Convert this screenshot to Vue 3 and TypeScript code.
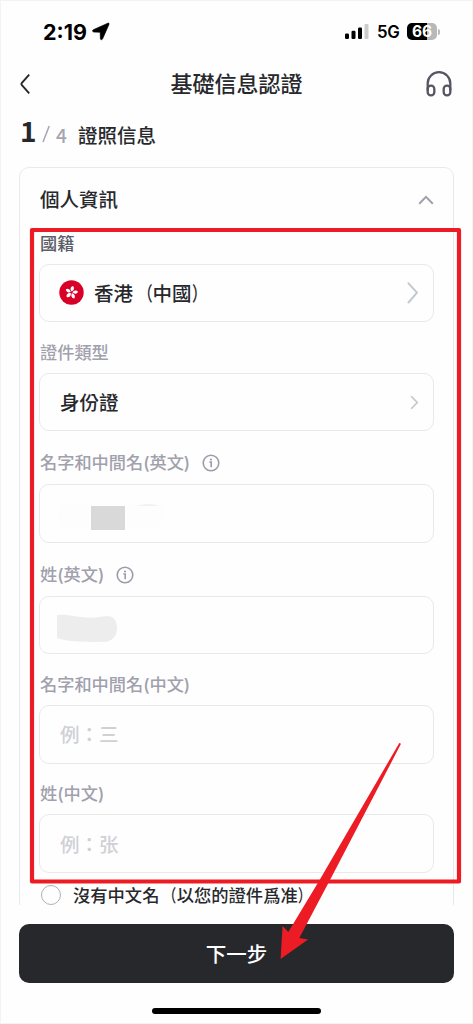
<script setup lang="ts">
interface Field {
  label: string
  kind: 'region' | 'select' | 'mask-block' | 'mask-blob' | 'input'
  value?: string
  info?: boolean
  dark?: boolean
}

const fields: Field[] = [
  { label: '國籍', kind: 'region', value: '香港（中國）', dark: true },
  { label: '證件類型', kind: 'select', value: '身份證' },
  { label: '名字和中間名(英文)', kind: 'mask-block', info: true },
  { label: '姓(英文)', kind: 'mask-blob', info: true },
  { label: '名字和中間名(中文)', kind: 'input', value: '例：三' },
  { label: '姓(中文)', kind: 'input', value: '例：张' },
]

const optionText = '沒有中文名（以您的證件爲准）'
const petals = [0, 72, 144, 216, 288]

// Full-width brackets are set apart so that they hug the text they enclose.
function pieces(text: string): string[] {
  return text.split(/([（）])/).filter((part) => part !== '')
}

function bracketClass(part: string): string {
  if (part === '（') return 'bracket open'
  return part === '）' ? 'bracket close' : ''
}
</script>

<template>
  <div class="phone">
    <header class="status">
      <span class="time">2:19</span>
      <svg class="location" width="18" height="19" viewBox="0 0 18 19">
        <path d="M15.9 1.2 1.3 7.8C.2 8.4.4 9.8 1.7 10L8.2 10.2 8.4 16.6C8.5 18 9.9 18.1 10.5 17L17 2.3C17.3 1.5 16.7 .9 15.9 1.2Z" fill="#000" stroke="#000" stroke-width=".7" />
      </svg>
      <svg class="signal" width="24" height="16" viewBox="0 0 24 16">
        <rect x="0" y="9.5" width="4" height="5.5" rx="1.2" />
        <rect x="6.5" y="6.8" width="4" height="8.2" rx="1.2" />
        <rect x="13" y="3.5" width="4" height="11.5" rx="1.2" />
        <rect x="19.5" y="0" width="4" height="15" rx="1.2" fill="#ccc" />
      </svg>
      <span class="network">5G</span>
      <span class="battery"><span class="level">66</span><i></i></span>
    </header>

    <nav class="nav">
      <svg class="back" width="11" height="22" viewBox="0 0 11 22">
        <path d="M9.2 1.6 1.7 10.2Q1.1 11 1.7 11.8L9.2 20.3" fill="none" stroke="#27282c" stroke-width="1.9" />
      </svg>
      <h1>基礎信息認證</h1>
      <svg class="support" width="26" height="26" viewBox="0 0 26 26" fill="none" stroke="#565663" stroke-width="2.3">
        <path d="M1.7 19.5V12.3a11.3 11.1 0 0 1 22.6 0v7.2" />
        <rect x="1.7" y="14.6" width="6.6" height="9.8" rx="3.2" />
        <rect x="17.7" y="14.6" width="6.6" height="9.8" rx="3.2" />
      </svg>
    </nav>

    <div class="step">
      <b>1</b>
      <svg width="8" height="18" viewBox="0 0 8 18"><path d="M7.2 1 1 17" stroke="#a6a5b1" stroke-width="1.5" /></svg>
      <span class="total">4</span>
      <span class="step-name">證照信息</span>
    </div>

    <main class="scroll">
      <section class="card">
        <div class="card-head">
          <h2>個人資訊</h2>
          <svg width="16" height="10" viewBox="0 0 16 10">
            <path d="M1.2 8.7 8 1.8l6.8 6.9" fill="none" stroke="#a09fac" stroke-width="2" />
          </svg>
        </div>

        <div v-for="field in fields" :key="field.label" class="field">
          <div class="label" :class="{ dark: field.dark, 'with-info': field.info }">
            <span>{{ field.label }}</span>
            <svg v-if="field.info" width="18" height="18" viewBox="0 0 18 18">
              <circle cx="9" cy="9" r="7.8" fill="none" stroke="#9d9caa" stroke-width="1.6" />
              <circle cx="9" cy="5.5" r="1.1" fill="#9d9caa" />
              <path d="M7.4 8H9.2V13.2" fill="none" stroke="#9d9caa" stroke-width="1.6" />
            </svg>
          </div>
          <div class="box" :class="field.kind">
            <svg v-if="field.kind === 'region'" class="flag" width="25" height="25" viewBox="0 0 25 25">
              <circle cx="12.5" cy="12.5" r="12.2" fill="#d80027" />
              <path
                v-for="angle in petals"
                :key="angle"
                d="M12.5 11.6C10.6 10.4 10.2 7.2 12.6 6C14.6 6.8 15 9.6 12.5 11.6Z"
                fill="#fff"
                :transform="`rotate(${angle + 10} 12.5 12.5)`"
              />
            </svg>
            <svg v-if="field.kind === 'mask-block'" class="mask" width="116" height="30" viewBox="0 0 116 30">
              <path d="M7 3H95Q106 1 109 3Q111 16 104 26H12Q4 26 2 17Z" fill="#fdfdfd" />
              <path d="M70 4Q83 4 88 2.5Q98 .8 103 4Z" fill="#f1f1f1" />
              <rect x="36" y="4" width="34" height="24" fill="#d9d9d9" />
            </svg>
            <svg v-if="field.kind === 'mask-blob'" class="mask" width="116" height="30" viewBox="0 0 116 30">
              <path d="M2 2.2C13 .5 21 4.6 34 4.6C44 4.8 47 2.7 54 3.3C60 4.5 62 9.5 62 15.5C62 23 57 28.5 50 28.7C39 29 14 29.5 2 25Z" fill="#ededed" />
            </svg>
            <span v-if="field.value" class="value"><span v-for="(part, i) in pieces(field.value)" :key="i" :class="bracketClass(part)">{{ part }}</span></span>
            <svg v-if="field.kind === 'region'" class="chevron large" width="12" height="22" viewBox="0 0 12 22">
              <path d="M1.5 1.3 10 10.7 1.5 20.5" fill="none" stroke="#c4c8cf" stroke-width="2" stroke-linecap="round" stroke-linejoin="round" />
            </svg>
            <svg v-if="field.kind === 'select'" class="chevron" width="9" height="15" viewBox="0 0 9 15">
              <path d="M1.2 1.2 7.3 7.5 1.2 13.8" fill="none" stroke="#c4c5cc" stroke-width="1.6" />
            </svg>
          </div>
        </div>

        <label class="option">
          <i class="radio"></i>
          <span><span v-for="(part, i) in pieces(optionText)" :key="i" :class="bracketClass(part)">{{ part }}</span></span>
        </label>
      </section>
    </main>

    <footer class="footer">
      <button class="next" type="button">下一步</button>
      <div class="home-bar"></div>
    </footer>

    <svg class="annotation" width="473" height="1024" viewBox="0 0 473 1024">
      <rect x="32" y="230" width="427" height="651.5" fill="none" stroke="#ed1c24" stroke-width="4.2" stroke-linejoin="round" />
      <path d="M399.3 743 401 743.8 330 880 299.3 938 308 939.6 280.6 959 282.6 926 288.3 932 319.6 880Z" fill="#ed1c24" />
    </svg>
  </div>
</template>

<style>
body {
  margin: 0;
}
</style>

<style scoped>
.phone {
  position: relative;
  display: flex;
  flex-direction: column;
  box-sizing: border-box;
  width: 473px;
  height: 1024px;
  overflow: hidden;
  background: #fefefe;
  border: 1px solid #f3f3f3;
  color: #27282c;
  font-family: Inter, "Noto Sans CJK TC", "Noto Sans CJK SC", sans-serif;
  font-weight: 500;
}

svg {
  display: block;
  flex: none;
}

.bracket {
  display: inline-block;
  font-family: "Noto Sans CJK SC", sans-serif;
  line-height: 1;
}

.open {
  transform: scaleX(0.75);
  transform-origin: 100% 50%;
}

.close {
  transform: scaleX(0.75);
  transform-origin: 0 50%;
}

.status {
  display: flex;
  align-items: center;
  height: 61px;
  flex: none;
  padding: 0 32px 0 42px;
  color: #000;
}

.time {
  width: 49px;
  font-size: 21.5px;
  font-weight: 700;
}

.signal {
  margin-left: auto;
}

.network {
  margin-left: 8px;
  width: 30px;
  font-size: 16.8px;
  font-weight: 600;
  letter-spacing: -0.2px;
}

.battery {
  display: flex;
  align-items: center;
  gap: 1px;
}

.level {
  width: 30px;
  height: 17px;
  border-radius: 5px;
  background: linear-gradient(90deg, #000 66%, #b8b8b8 66%);
  color: #fff;
  font-size: 15.5px;
  font-weight: 700;
  line-height: 17px;
  text-align: center;
}

.battery i {
  width: 2px;
  height: 6px;
  border-radius: 0 2px 2px 0;
  background: #bbb;
}

.nav {
  display: flex;
  align-items: center;
  justify-content: space-between;
  height: 44px;
  flex: none;
  padding: 0 20px 0 19px;
}

.back {
  margin-right: 16px;
}

h1,
h2 {
  margin: 0;
  font-weight: 500;
}

h1 {
  font-size: 22px;
  line-height: 44px;
}

.step {
  display: flex;
  align-items: center;
  height: 61px;
  flex: none;
  box-sizing: border-box;
  padding: 0 0 5px 19px;
}

.step b {
  width: 22px;
  font-family: "Noto Sans CJK TC", sans-serif;
  font-size: 28px;
  font-weight: 700;
  line-height: 40px;
  margin-top: -8px;
}

.total {
  width: 21px;
  margin-left: 6px;
  color: #a6a5b1;
  font-family: "Noto Sans CJK TC", sans-serif;
  font-size: 19px;
}

.step-name {
  margin-left: 1px;
  font-size: 19.5px;
}

.scroll {
  flex: none;
  height: 738px;
  overflow: hidden;
  padding: 0 18px;
}

.card {
  box-sizing: border-box;
  height: 780px;
  padding: 0 19px;
  border: 1.5px solid #e9e9ec;
  border-radius: 10px;
}

.card-head {
  display: flex;
  align-items: center;
  justify-content: space-between;
  box-sizing: border-box;
  height: 45px;
  padding: 19px 0 0 1px;
}

h2 {
  font-size: 19.5px;
  line-height: 26px;
}

.label {
  display: flex;
  align-items: center;
  gap: 12px;
  box-sizing: border-box;
  height: 50.7px;
  padding: 11px 0 0 1px;
  color: #a1a0ad;
  font-size: 17.2px;
  line-height: 24px;
}

.label.with-info {
  height: 53px;
}

.label.dark {
  color: #5c5b68;
}

.box {
  display: flex;
  align-items: center;
  box-sizing: border-box;
  height: 58.5px;
  padding: 0 14px 0 20px;
  border: 1.5px solid #e9e9ea;
  border-radius: 10px;
  font-size: 19.5px;
}

.box.region {
  padding-left: 19px;
}

.value {
  padding-bottom: 1px;
}

.flag {
  margin-right: 10px;
}

.mask {
  margin: 6px 0 0 -5px;
}

.chevron {
  margin-left: auto;
}

.input .value {
  color: #d0d0d5;
}

.option {
  display: flex;
  align-items: center;
  gap: 12px;
  height: 44px;
  padding-left: 2px;
  font-size: 17.3px;
  line-height: 1;
  white-space: nowrap;
}

.radio {
  box-sizing: border-box;
  width: 20px;
  height: 20px;
  border: 1.5px solid #b0afba;
  border-radius: 50%;
}

.footer {
  display: flex;
  flex-direction: column;
  align-items: center;
  padding: 19px 18px 0;
}

.next {
  width: 100%;
  height: 58.5px;
  padding: 0;
  border: 0;
  border-radius: 10px;
  background: #27282c;
  color: #fff;
  font: inherit;
  font-size: 20.5px;
}

.home-bar {
  width: 169px;
  height: 6px;
  margin-top: 25px;
  border-radius: 3px;
  background: #000;
}

.annotation {
  position: absolute;
  top: -1px;
  left: -1px;
  pointer-events: none;
}
</style>
